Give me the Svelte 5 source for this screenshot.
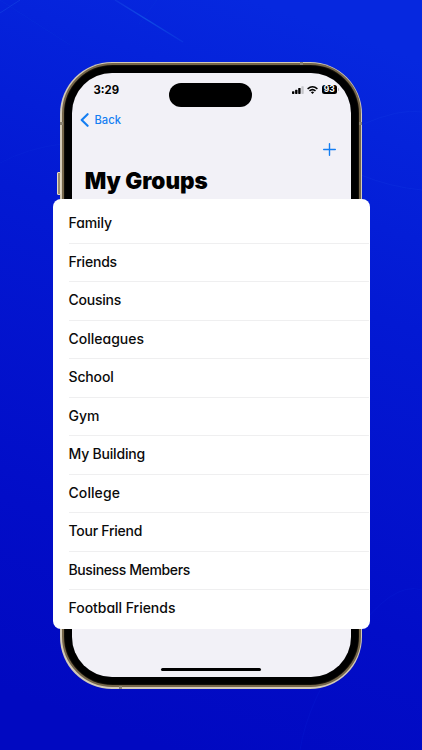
<script lang="ts">
  // tracking is the letter spacing in px
  const groups = [
    { name: 'Family', tracking: -0.1 },
    { name: 'Friends', tracking: -0.2 },
    { name: 'Cousins', tracking: -0.25 },
    { name: 'Colleagues', tracking: 0 },
    { name: 'School', tracking: -0.15 },
    { name: 'Gym', tracking: 0 },
    { name: 'My Building', tracking: -0.2 },
    { name: 'College', tracking: 0.08 },
    { name: 'Tour Friend', tracking: -0.25 },
    { name: 'Business Members', tracking: -0.38 },
    { name: 'Football Friends', tracking: -0.03 }
  ];
</script>

<div class="stage">
  <svg class="backdrop" viewBox="0 0 422 750" aria-hidden="true">
    <defs>
      <linearGradient id="bg" x1="0.6" y1="0" x2="0.4" y2="1">
        <stop offset="0" stop-color="#0628df" />
        <stop offset="0.35" stop-color="#0319d3" />
        <stop offset="0.75" stop-color="#020dc8" />
        <stop offset="1" stop-color="#0109c1" />
      </linearGradient>
      <linearGradient id="ray" x1="0" y1="0" x2="1" y2="1">
        <stop offset="0" stop-color="#2463ea" stop-opacity="0.2" />
        <stop offset="0.45" stop-color="#1768ea" stop-opacity="0.6" />
        <stop offset="1" stop-color="#1459e6" stop-opacity="0.25" />
      </linearGradient>
    </defs>
    <rect width="422" height="750" fill="url(#bg)" />
    <g fill="none" stroke-width="1">
      <path d="M115 0L183 42" stroke="url(#ray)" stroke-width="1.4" />
      <path d="M0 13L20 0" stroke="#1c55e5" opacity="0.4" />
      <path d="M0 0L70 45M157 0L139 24" stroke="#1747e0" opacity="0.15" />
      <path d="M361 175Q390 187 422 190M361 125Q400 108 422 112" stroke="#1748e4" opacity="0.2" />
      <path d="M0 163Q28 148 62 144" stroke="#1545e0" opacity="0.12" />
      <path d="M300 750Q308 700 350 640T422 590" stroke="#0d2fdb" opacity="0.18" />
    </g>
  </svg>

  <div class="phone">
    <span class="side-key"></span>
    <span class="band top"></span>
    <span class="band left"></span>
    <span class="band right"></span>
    <span class="band bottom"></span>
    <div class="bezel">
      <main class="screen">
        <div class="status">
          <time>3:29</time>
          <span class="island"></span>
          <div class="indicators">
            <svg width="12" height="8" viewBox="0 0 12 8" aria-hidden="true">
              <rect x="0" y="5.2" width="2.4" height="2.7" rx="0.6" />
              <rect x="3.1" y="3.8" width="2.4" height="4.1" rx="0.6" />
              <rect x="6.2" y="2" width="2.4" height="5.9" rx="0.6" />
              <rect x="9.4" y="0.2" width="2.3" height="7.7" rx="0.6" fill="#c4c4c9" />
            </svg>
            <svg width="11" height="8" viewBox="0 0 11 8" aria-hidden="true">
              <g fill="none" stroke="#000" stroke-width="1.5">
                <path d="M0.6 2.9Q5.5 -1.3 10.4 2.9" />
                <path d="M2.5 4.9Q5.5 2.3 8.5 4.9" />
              </g>
              <path d="M3.9 6.2Q5.5 5 7.1 6.2L5.5 7.9Z" />
            </svg>
            <div class="battery">93</div>
          </div>
        </div>

        <button class="back" type="button">
          <svg width="9" height="14" viewBox="0 0 9 14" aria-hidden="true">
            <path d="M7.6 1.2L1.7 7L7.6 12.8" />
          </svg>
          Back
        </button>

        <button class="add" type="button" aria-label="Add group">
          <svg width="13" height="13" viewBox="0 0 13 13" aria-hidden="true">
            <path d="M6.5 0.7V12.3M0.7 6.5H12.3" />
          </svg>
        </button>

        <h1>My Groups</h1>
        <span class="home-bar"></span>
      </main>
    </div>
  </div>

  <ul class="groups">
    {#each groups as group}
      <li style="letter-spacing: {group.tracking}px">{group.name}</li>
    {/each}
  </ul>
</div>

<style>
  :global(body) {
    background: #0319d3;
  }

  .stage {
    position: relative;
    box-sizing: border-box;
    width: 422px;
    height: 750px;
    padding: 61.5px 60px 0;
    overflow: hidden;
    font-family: Inter, 'Liberation Sans', sans-serif;
    color: #000;
  }

  .backdrop {
    position: absolute;
    inset: 0;
    width: 422px;
    height: 750px;
  }

  .phone {
    position: relative;
    box-sizing: border-box;
    width: 302px;
    height: 627px;
    padding: 1.5px;
    border-radius: 52px;
    background: #d3cab8;
  }

  .bezel {
    box-sizing: border-box;
    height: 624px;
    padding: 8px;
    border: 2px solid #75664a;
    border-radius: 50.5px;
    background: #000;
    box-shadow: inset 0 0 1px 0.5px #211b10;
  }

  .side-key {
    position: absolute;
    left: -3px;
    top: 110px;
    box-sizing: border-box;
    width: 4px;
    height: 23px;
    border: 1px solid #e5dac3;
    border-radius: 1px;
    background: #9b8b70;
  }

  .band {
    position: absolute;
    background: #8b8371;
  }

  .band.top {
    left: 240px;
    top: 0;
    width: 3px;
    height: 3px;
  }

  .band.bottom {
    left: 59px;
    bottom: 0;
    width: 3px;
    height: 3px;
  }

  .band.left {
    left: 0;
    top: 60px;
    width: 3px;
    height: 3px;
  }

  .band.right {
    right: 0;
    top: 60px;
    width: 3px;
    height: 3px;
  }

  .screen {
    display: flex;
    flex-direction: column;
    box-sizing: border-box;
    height: 604px;
    padding: 10px 12px 0 12.5px;
    border-radius: 40px;
    background: #f2f1f7;
  }

  .status {
    display: flex;
    align-items: flex-start;
    height: 24px;
  }

  time {
    width: 85px;
    box-sizing: border-box;
    padding: 0 0 0 9.5px;
    font-size: 11.3px;
    font-weight: 700;
    line-height: 14px;
  }

  .island {
    width: 83px;
    height: 24px;
    border-radius: 12px;
    background: #000;
  }

  .indicators {
    display: flex;
    align-items: center;
    gap: 3.5px;
    margin-left: auto;
    padding: 2px 1.5px 0 0;
  }

  .battery {
    position: relative;
    width: 15.5px;
    height: 9px;
    border-radius: 2.5px;
    background: #000;
    color: #fff;
    font-size: 8.5px;
    font-weight: 700;
    line-height: 9px;
    text-align: center;
  }

  .battery::after {
    content: '';
    position: absolute;
    right: -1.8px;
    top: 3px;
    width: 1px;
    height: 3px;
    border-radius: 0 1px 1px 0;
    background: #b5b5bb;
  }

  button {
    display: flex;
    align-items: center;
    padding: 0;
    border: 0;
    background: none;
    font: inherit;
    color: #147ef2;
  }

  button svg {
    fill: none;
    stroke: currentColor;
    stroke-linecap: round;
    stroke-linejoin: round;
  }

  .back {
    align-self: flex-start;
    gap: 6px;
    height: 16px;
    margin: 5px 0 0 -4.5px;
    font-size: 11.2px;
    font-weight: 500;
  }

  .back svg {
    stroke-width: 2.1;
  }

  .add {
    align-self: flex-end;
    height: 13px;
    margin: 14.5px 3px 0 0;
  }

  .add svg {
    stroke-width: 1.4;
  }

  h1 {
    margin: 11px 0 0 0.7px;
    font-size: 22.5px;
    font-weight: 900;
    line-height: 28px;
    letter-spacing: 0;
    white-space: nowrap;
  }

  .home-bar {
    align-self: center;
    width: 100px;
    height: 3px;
    margin: auto 0 6px;
    border-radius: 2px;
    background: #000;
  }

  .groups {
    position: absolute;
    left: 52.5px;
    top: 199px;
    box-sizing: border-box;
    width: 317px;
    height: 429.5px;
    margin: 0;
    padding: 6px 1px 0 16px;
    border-radius: 8px;
    background: #fff;
    list-style: none;
  }

  li {
    box-sizing: border-box;
    height: 38.55px;
    border-bottom: 1px solid #efeff0;
    font-size: 14px;
    font-weight: 500;
    line-height: 35px;
    font-feature-settings: 'cv11';
    color: #0b0b0b;
  }

  li:last-child {
    border-bottom: 0;
  }
</style>
